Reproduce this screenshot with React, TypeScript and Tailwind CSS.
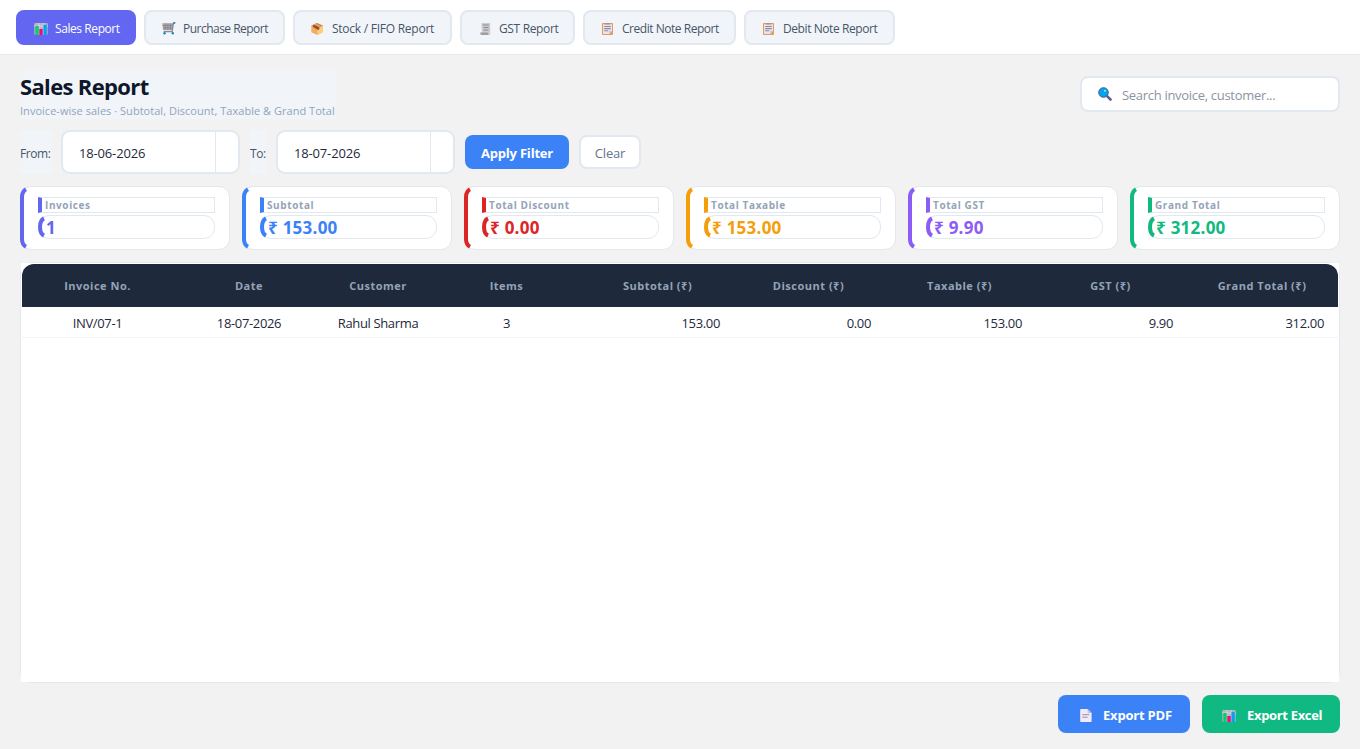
import type { ReactNode } from "react";

function ChartIcon() {
  return (
    <svg width="14" height="12" viewBox="0 0 14 12" className="block shrink-0">
      <rect x="0.3" y="0" width="13.4" height="12" rx="1" fill="#b9b4c6" />
      <path d="M5 0v12M9.3 0v12M0 3h14" stroke="#dedbe6" strokeWidth="0.8" />
      <rect x="1.3" y="3" width="3.4" height="9" fill="#00d26a" />
      <rect x="5.3" y="6" width="3.4" height="6" fill="#f8087d" />
      <rect x="9.4" y="1.8" width="3.4" height="10.2" fill="#00a6ed" />
    </svg>
  );
}

function CartIcon() {
  return (
    <svg width="14" height="13" viewBox="0 0 14 13" className="block shrink-0">
      <path d="M0.3 1.2H11.2l-.7 7H1.2z" fill="#a5a3a8" />
      <path d="M.5 3.5h10.5M.8 5.8h10M3.3 1.5v6.5M5.9 1.5v6.5M8.5 1.5v6.5" stroke="#85838a" strokeWidth="0.6" />
      <path d="M13.2.9h-1.7l-1.3 8.7H1.7" fill="none" stroke="#8b8990" strokeWidth="1.2" />
      <path d="M11.3.9h2" stroke="#1783c4" strokeWidth="1.4" />
      <circle cx="2.5" cy="11.3" r="1.2" fill="#1783c4" />
      <circle cx="10.8" cy="11.3" r="1.2" fill="#1783c4" />
    </svg>
  );
}

function BoxIcon() {
  return (
    <svg width="12" height="12" viewBox="0 0 12 12" className="block shrink-0">
      <path d="M6 0l6 2.8v6.3L6.5 12 .3 9.2V2.8z" fill="#f3ad61" />
      <path d="M.3 2.8L6 0l6 2.8-5.5 2.6z" fill="#d78543" />
      <path d="M6.5 5.4L12 2.8v6.3L6.5 12z" fill="#ffce7c" />
      <path d="M2.6 1.7l5.8 2.6v2L7 7 2 3.9z" fill="#8f513b" />
      <path d="M4.8.7l5.5 2.8-1.6.8-5.7-2.7z" fill="#e9a365" />
    </svg>
  );
}

function ReceiptIcon() {
  return (
    <svg width="11" height="12" viewBox="0 0 11 12" className="block shrink-0">
      <path d="M1.4 0h8.8v12H2V9.5z" fill="#cccbce" />
      <path d="M2.8 2h6M3.5 4.5h5M3.5 7h5" stroke="#8b898e" strokeWidth="1.2" />
      <path d="M.2 9.4h7.6c0 1.6.5 2.6 1.8 2.6H1.8C.8 12 .2 11 .2 9.4z" fill="#a09ea3" />
    </svg>
  );
}

function ClipboardIcon() {
  return (
    <svg width="11" height="12" viewBox="0 0 11 12" className="block shrink-0">
      <rect x="0" y="0" width="11" height="12" rx="0.8" fill="#e59a59" />
      <path d="M1 1.2h9v6.8L7.2 11H1z" fill="#e8e3ec" />
      <path d="M7.2 11V8H10z" fill="#cbbfd0" />
      <path d="M3 0h5v1.5H3z" fill="#9b94a4" />
      <path d="M2.2 3.5h6.6M2.2 5.6h6.6M2.2 7.7h4" stroke="#8f899a" strokeWidth="1.1" />
    </svg>
  );
}

function PageIcon() {
  return (
    <svg width="12" height="13" viewBox="0 0 12 13" className="block shrink-0">
      <path d="M1 0h6.6L11.6 4v8.2a.8.8 0 0 1-.8.8H1a.8.8 0 0 1-.8-.8V.8A.8.8 0 0 1 1 0z" fill="#f1eaf7" />
      <path d="M7.6 0v3.2c0 .5.3.8.8.8h3.2z" fill="#c6b7d6" />
      <path d="M2.3 5.7h7M2.3 8.2h5.3" stroke="#998ea4" strokeWidth="1" />
    </svg>
  );
}

function SearchIcon() {
  return (
    <svg width="14" height="14" viewBox="0 0 14 14" className="block shrink-0">
      <path d="M8.8 8.8l3.7 3.7" stroke="#635994" strokeWidth="2.6" strokeLinecap="round" />
      <circle cx="5.5" cy="5.5" r="4.8" fill="#00a6ed" stroke="#4c5a91" strokeWidth="1" />
      <circle cx="7" cy="3.7" r="1" fill="#a5e2fb" />
    </svg>
  );
}

type Tab = { label: string; icon: ReactNode; box: string; text: string; active?: boolean };

const tabs: Tab[] = [
  { label: "Sales Report", icon: <ChartIcon />, box: "w-[120px] pl-4", text: "ml-[7px] tracking-[-0.42px]", active: true },
  { label: "Purchase Report", icon: <CartIcon />, box: "w-[141px] pl-4", text: "ml-[7px] tracking-[-0.52px]" },
  { label: "Stock / FIFO Report", icon: <BoxIcon />, box: "w-[159px] pl-4", text: "ml-[9px] tracking-[-0.25px]" },
  { label: "GST Report", icon: <ReceiptIcon />, box: "w-[115px] pl-[18px]", text: "ml-2 tracking-[-0.35px]" },
  { label: "Credit Note Report", icon: <ClipboardIcon />, box: "w-[153px] pl-[17px]", text: "ml-[9px] tracking-[-0.47px]" },
  { label: "Debit Note Report", icon: <ClipboardIcon />, box: "w-[151px] pl-[17px]", text: "ml-[9px] tracking-[-0.42px]" },
];

const cards = [
  { label: "Invoices", value: "1", color: "text-[#6366f1]" },
  { label: "Subtotal", value: "₹ 153.00", color: "text-[#3b82f6]" },
  { label: "Total Discount", value: "₹ 0.00", color: "text-[#dc2626]" },
  { label: "Total Taxable", value: "₹ 153.00", color: "text-[#f59e0b]" },
  { label: "Total GST", value: "₹ 9.90", color: "text-[#8b5cf6]" },
  { label: "Grand Total", value: "₹ 312.00", color: "text-[#10b981]" },
];

const columns = [
  { title: "Invoice No.", value: "INV/07-1", align: "text-center" },
  { title: "Date", value: "18-07-2026", align: "text-center" },
  { title: "Customer", value: "Rahul Sharma", align: "text-center" },
  { title: "Items", value: "3", align: "text-center" },
  { title: "Subtotal (₹)", value: "153.00", align: "text-right pr-[13px]" },
  { title: "Discount (₹)", value: "0.00", align: "text-right pr-[13px]" },
  { title: "Taxable (₹)", value: "153.00", align: "text-right pr-[13px]" },
  { title: "GST (₹)", value: "9.90", align: "text-right pr-[13px]" },
  { title: "Grand Total (₹)", value: "312.00", align: "text-right pr-[14px]" },
];

const grid = "grid grid-cols-[151px_152px_106px_151px_151px_151px_151px_151px_152px]";

function DateField({ value }: { value: string }) {
  return (
    <div className="flex h-11 w-[179px] rounded-[9px] border-2 border-[#e2e8f0] bg-white">
      <div className="flex flex-1 items-center border-r border-[#e2e8f0] pt-1 pl-4 text-[13px] tracking-[-0.16px] text-[#1e293b]">
        {value}
      </div>
      <div className="w-[22px]" />
    </div>
  );
}

function StatCard({ label, value, color }: { label: string; value: string; color: string }) {
  return (
    <div className={`relative flex h-16 w-[210px] flex-col rounded-[11px] border border-[#e2e8f0] bg-white pt-[10px] pl-[17px] ${color}`}>
      <svg width="8" height="64" viewBox="0 0 8 64" className="absolute -top-px -left-px">
        <path d="M6 3.2Q2 5.5 2 11V53Q2 58.5 6 60.8" fill="none" stroke="currentColor" strokeWidth="4" />
      </svg>
      <div className="flex h-4 w-[177px] items-center border border-l-4 border-[#e2e8f0] border-l-current pl-[3px]">
        <span className="text-[10px] font-bold tracking-[0.6px] whitespace-nowrap text-[#94a3b8]">{label}</span>
      </div>
      <div className="relative mt-0.5 flex h-6 w-[177px] items-center rounded-[11px] border border-[#e2e8f0] pt-0.5 pl-[7px]">
        <svg width="8" height="24" viewBox="0 0 8 24" className="absolute -top-px -left-px">
          <path d="M6 3.4C.7 6 .7 18 6 20.6" fill="none" stroke="currentColor" strokeWidth="4" />
        </svg>
        <span className="text-[17px] font-bold tracking-[0.25px] whitespace-nowrap">{value}</span>
      </div>
    </div>
  );
}

export default function App() {
  return (
    <div className="flex h-[749px] w-[1360px] flex-col overflow-hidden bg-[#f2f2f2] font-['Open_Sans','Noto_Sans',sans-serif] text-[13px] text-[#1e293b]">
      <nav className="flex h-[55px] shrink-0 gap-2 border-b border-[#e2e8f0] bg-white pt-[10px] pl-4">
        {tabs.map((t) => (
          <button
            key={t.label}
            className={`flex h-[35px] shrink-0 items-center rounded-lg border-2 pt-0.5 ${t.box} ${
              t.active ? "border-[#6366f1] bg-[#6366f1] text-white" : "border-[#e2e8f0] bg-[#f1f5f9] text-[#475569]"
            }`}
          >
            {t.icon}
            <span className={`text-[12px] font-medium whitespace-nowrap ${t.text}`}>{t.label}</span>
          </button>
        ))}
      </nav>

      <header className="flex h-[66px] shrink-0 justify-between px-5 pt-4">
        <div className="w-[316px]">
          <h1 className="flex h-[31px] items-center bg-[#f1f5f9] text-[22px] font-bold tracking-[-0.65px] text-[#0f172a]">
            Sales Report
          </h1>
          <p className="mt-px flex h-4 items-center bg-[#f1f5f9] text-[11px] tracking-[0.03px] whitespace-nowrap text-[#94a3b8]">
            Invoice-wise sales · Subtotal, Discount, Taxable &amp; Grand Total
          </p>
        </div>
        <div className="mt-[5px] flex h-9 w-[260px] items-center rounded-lg border-2 border-[#e2e8f0] bg-white pl-4">
          <SearchIcon />
          <span className="ml-[10px] pt-[3px] text-[13px] tracking-[-0.3px] text-[#8e949f]">Search invoice, customer...</span>
        </div>
      </header>

      <div className="flex h-[65px] shrink-0 pt-[9px] pl-5">
        <div className="flex h-11 w-8 items-center bg-[#f1f5f9] pt-[3px] text-[12px] font-medium tracking-[-0.4px] text-[#475569]">From:</div>
        <div className="ml-[9px]">
          <DateField value="18-06-2026" />
        </div>
        <div className="ml-[10px] flex h-11 w-4 items-center bg-[#f1f5f9] pt-[3px] text-[12px] font-medium tracking-[-0.4px] text-[#475569]">To:</div>
        <div className="ml-[10px]">
          <DateField value="18-07-2026" />
        </div>
        <button className="mt-[5px] ml-[10px] flex h-[34px] w-[104px] items-center justify-center rounded-lg bg-[#3b82f6] pt-[3px] text-[13px] font-bold tracking-[-0.2px] text-white">
          Apply Filter
        </button>
        <button className="mt-[5px] ml-[10px] flex h-[34px] w-[62px] items-center justify-center rounded-lg border-2 border-[#e2e8f0] bg-white pt-[3px] text-[13px] tracking-[-0.2px] text-[#64748b]">
          Clear
        </button>
      </div>

      <section className="flex shrink-0 gap-3 px-5">
        {cards.map((c) => (
          <StatCard key={c.label} {...c} />
        ))}
      </section>

      <section className="mx-5 mt-3 h-[421px] shrink-0 rounded-xl border border-[#e2e8f0]">
        <div className="h-full bg-white p-px">
          <div className={`h-[43px] items-center rounded-t-xl bg-[#1e293b] ${grid}`}>
            {columns.map((c) => (
              <div key={c.title} className="pt-0.5 text-center text-[11px] font-bold tracking-[0.5px] whitespace-nowrap text-[#94a3b8]">
                {c.title}
              </div>
            ))}
          </div>
          <div className={`h-[31px] items-center border-b border-[#f1f5f9] ${grid}`}>
            {columns.map((c) => (
              <div key={c.title} className={`pt-1 text-[13px] tracking-[-0.35px] whitespace-nowrap ${c.align}`}>
                {c.value}
              </div>
            ))}
          </div>
        </div>
      </section>

      <footer className="flex justify-end gap-3 px-5 pt-3 text-[13px] font-bold text-white">
        <button className="flex h-[38px] w-[132px] items-center rounded-lg bg-[#3b82f6] pt-[3px] pl-[22px]">
          <PageIcon />
          <span className="ml-[11px] tracking-[-0.2px] whitespace-nowrap">Export PDF</span>
        </button>
        <button className="flex h-[38px] w-[138px] items-center rounded-lg bg-[#10b981] pt-[3px] pl-5">
          <ChartIcon />
          <span className="ml-[11px] tracking-[-0.33px] whitespace-nowrap">Export Excel</span>
        </button>
      </footer>
    </div>
  );
}
